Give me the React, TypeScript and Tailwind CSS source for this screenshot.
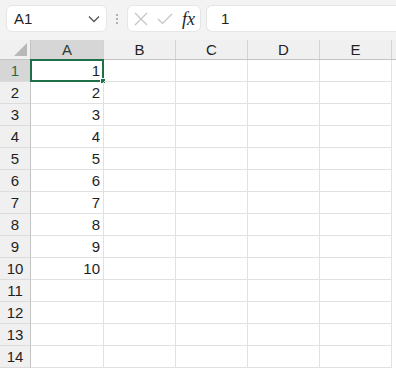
import React from 'react';

const cols = ['A', 'B', 'C', 'D', 'E'];
const rows = Array.from({ length: 14 }, (_, i) => i + 1);

const XIcon = () => (
  <svg width="14" height="14" viewBox="0 0 14 14" fill="none" stroke="#c4c4c4" strokeWidth="1.2">
    <path d="M1 1 L13 13 M13 1 L1 13" />
  </svg>
);

const CheckIcon = () => (
  <svg width="16" height="12" viewBox="0 0 16 12" fill="none" stroke="#c4c4c4" strokeWidth="1.2">
    <path d="M1 6 L5.5 10.5 L15 1" />
  </svg>
);

export default function App() {
  return (
    <div className="w-[396px] h-[372px] overflow-hidden bg-white text-[#1f1f1f]" style={{ fontFamily: '"Liberation Sans", Arial, sans-serif' }}>
      {/* formula bar */}
      <div className="h-[40px] bg-[#f3f3f3] flex items-start pt-[5px] pl-[6px]">
        <div className="w-[101px] h-[27px] bg-white rounded-[6px] border border-[#e6e6e6] flex items-center justify-between pl-[7px] pr-[6px]">
          <span className="text-[15px] leading-none">A1</span>
          <svg width="12" height="8" viewBox="0 0 12 8" fill="none" stroke="#555" strokeWidth="1.3">
            <path d="M1 1.5 L6 6.5 L11 1.5" />
          </svg>
        </div>
        <div className="w-[20px] h-[27px] flex flex-col items-center justify-center gap-[2px]">
          <span className="w-[2px] h-[2px] bg-[#9a9a9a] rounded-full" />
          <span className="w-[2px] h-[2px] bg-[#9a9a9a] rounded-full" />
          <span className="w-[2px] h-[2px] bg-[#9a9a9a] rounded-full" />
        </div>
        <div className="w-[74px] h-[27px] bg-white rounded-[6px] border border-[#e6e6e6] flex items-center pl-[6px] gap-[9px]">
          <XIcon />
          <CheckIcon />
          <span className="text-[18px] italic leading-none" style={{ fontFamily: '"Liberation Serif", serif' }}>fx</span>
        </div>
        <div className="ml-[5px] flex-1 h-[27px] bg-white rounded-l-[6px] border border-r-0 border-[#e6e6e6] flex items-center pl-[14px]">
          <span className="text-[15px] leading-none">1</span>
        </div>
      </div>

      {/* column headers */}
      <div className="flex h-[20px] bg-[#f0f0f0] border-b border-[#c4c4c4]">
        <div className="w-[31px] shrink-0 border-r border-[#c4c4c4] flex items-end justify-end pr-[3px] pb-[3px]">
          <svg width="13" height="13" viewBox="0 0 13 13">
            <path d="M13 0 L13 13 L0 13 Z" fill="#b8b8b8" />
          </svg>
        </div>
        {cols.map((c, i) => (
          <div
            key={c}
            className={
              (i === 0 ? 'w-[73px] bg-[#d6d6d6] text-[#2b3d33] ' : 'w-[72px] ') +
              'shrink-0 border-r border-[#d4d4d4] flex items-center justify-center text-[15px] leading-none'
            }
          >
            {c}
          </div>
        ))}
      </div>

      {/* rows */}
      {rows.map((r) => (
        <div key={r} className="flex h-[22px]">
          <div
            className={
              (r === 1 ? 'bg-[#d6d6d6] text-[#1e6e4a] ' : 'bg-[#f0f0f0] ') +
              'w-[31px] shrink-0 border-r border-b border-r-[#c4c4c4] border-b-[#dcdcdc] flex items-center justify-center text-[15px] leading-none'
            }
          >
            {r}
          </div>
          {cols.map((c, i) => (
            <div
              key={c}
              className={
                (i === 0 ? 'w-[73px] ' : 'w-[72px] ') +
                'relative shrink-0 border-r border-b border-[#e1e1e1] flex items-center justify-end pr-[3px] text-[15px] leading-none'
              }
            >
              {i === 0 && r <= 10 ? r : ''}
              {i === 0 && r === 1 && (
                <>
                  <div className="absolute -left-[1px] -top-[1px] -right-[1px] -bottom-[1px] border-2 border-[#1e6e4a] pointer-events-none" />
                  <div className="absolute -right-[3px] -bottom-[3px] w-[6px] h-[6px] bg-[#1e6e4a] border border-white" />
                </>
              )}
            </div>
          ))}
        </div>
      ))}
    </div>
  );
}
